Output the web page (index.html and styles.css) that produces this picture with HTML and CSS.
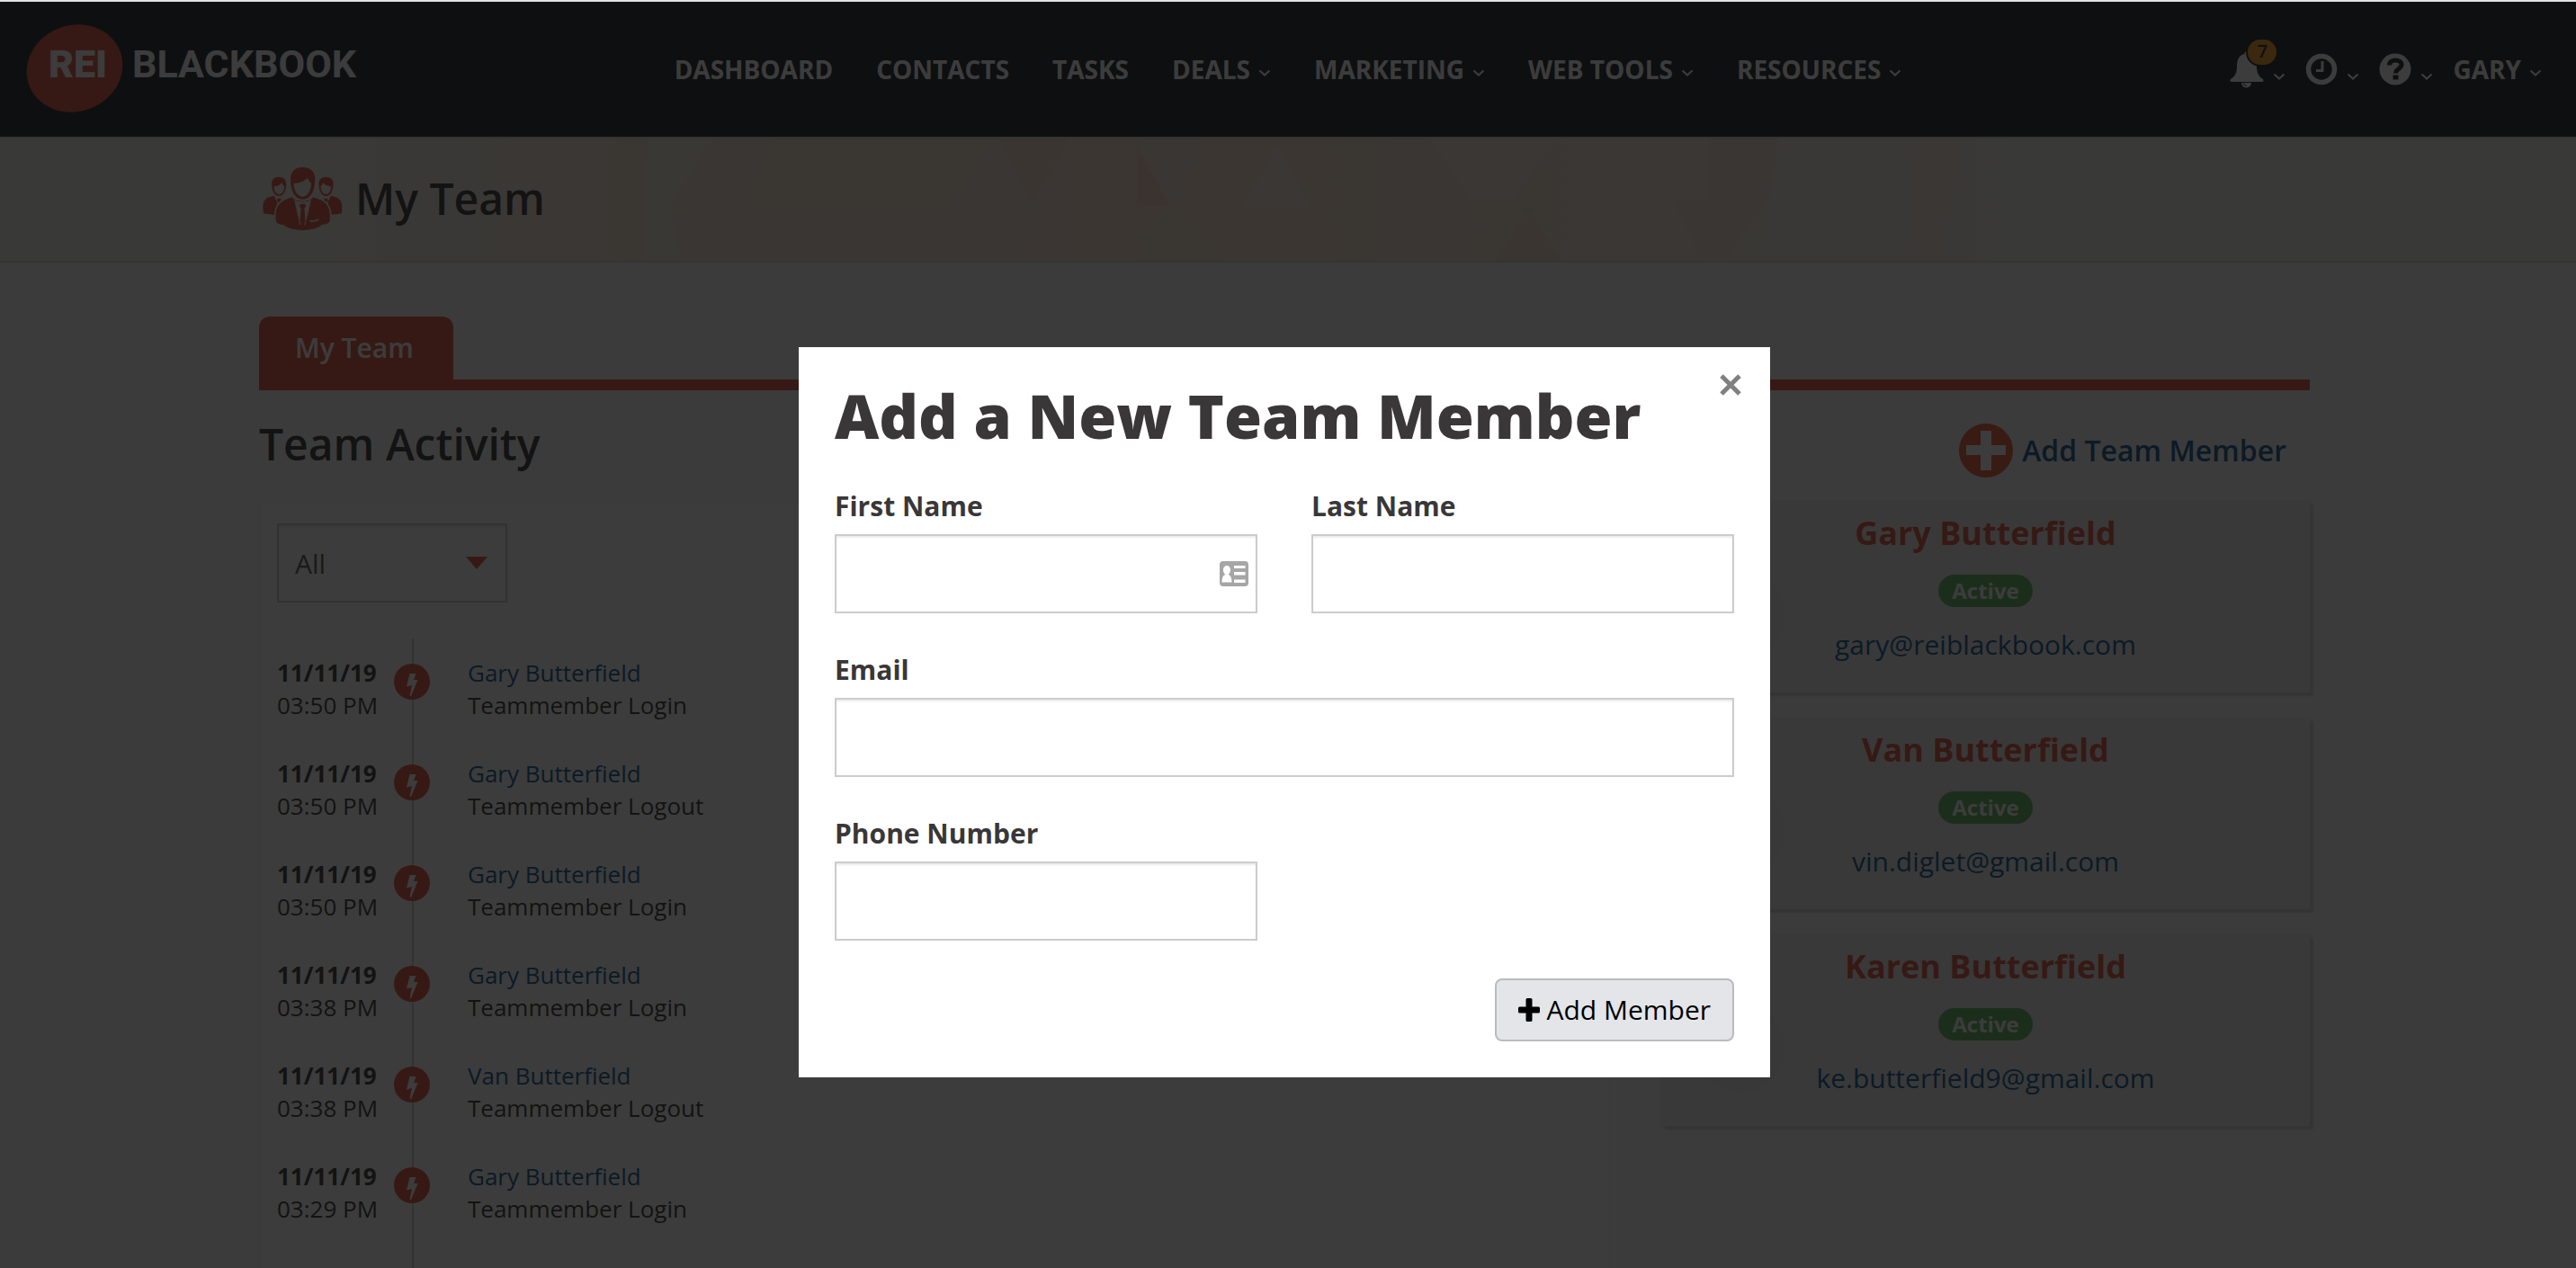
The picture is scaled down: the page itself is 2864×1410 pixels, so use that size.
FILE: index.html
```html
<!DOCTYPE html>
<html lang="en">
<head>
<meta charset="utf-8">
<meta name="viewport" content="width=device-width, initial-scale=1">
<title>My Team</title>
<link rel="stylesheet" href="styles.css">
</head>
<body>
<svg class="sprite" aria-hidden="true">
  <symbol id="chevron" viewBox="0 0 14 8"><path d="M1.5 1.5 7 6.500 12.500 1.500" fill="none" stroke="currentColor" stroke-width="2.200"/></symbol>
  <symbol id="bolt" viewBox="0 0 40 40"><path d="M17.500 11h7l-2.500 7h4.500l-7.500 18-1.500-.5 2.500-11.500-6 1.500z" fill="#fff"/></symbol>
</svg>

<header class="topbar">
  <a class="logo" href="#" aria-label="REI BlackBook">
    <svg width="372" height="100" viewBox="0 0 372 100">
      <ellipse cx="53" cy="49" rx="54" ry="48" transform="rotate(-20 53 49)" fill="#e25138"/>
      <text class="logo-rei" x="24" y="59">REI</text>
      <text class="logo-name" x="117" y="59">BLACKBOOK</text>
    </svg>
  </a>
  <nav class="mainnav">
    <a href="#">DASHBOARD</a>
    <a href="#">CONTACTS</a>
    <a href="#">TASKS</a>
    <a href="#">DEALS <svg class="chev"><use href="#chevron"/></svg></a>
    <a href="#">MARKETING <svg class="chev"><use href="#chevron"/></svg></a>
    <a href="#">WEB TOOLS <svg class="chev"><use href="#chevron"/></svg></a>
    <a href="#">RESOURCES <svg class="chev"><use href="#chevron"/></svg></a>
  </nav>
  <div class="tools">
    <button class="tool bell" type="button" aria-label="Notifications">
      <svg width="38" height="42" viewBox="0 0 38 42"><path d="M16.500 4q0-3 2-3t2 3c6 1 9.500 6 9.500 13 0 8 2 12 7 15 1 2 .5 3-1 3H2c-1.500 0-2-1-1-3 5-3 7-7 7-15 0-7 3-12 8.500-13z" fill="#fff"/><path d="M13 36h11a5.500 5.500 0 0 1-11 0z" fill="#fff"/><path d="M15.500 36.500q.5 2.500 3 3" fill="none" stroke="#1a2025"/></svg>
      <span class="count">7</span>
      <svg class="chev low"><use href="#chevron"/></svg>
    </button>
    <button class="tool" type="button" aria-label="Recent">
      <svg width="36" height="36" viewBox="0 0 36 36"><circle cx="18" cy="18" r="14.500" fill="none" stroke="#fff" stroke-width="5.500"/><path d="M19 9v10.500h-7" fill="none" stroke="#fff" stroke-width="3"/></svg>
      <svg class="chev low"><use href="#chevron"/></svg>
    </button>
    <button class="tool" type="button" aria-label="Help">
      <svg width="36" height="36" viewBox="0 0 36 36"><circle cx="18" cy="18" r="17.500" fill="#fff"/><path d="M11.500 13.500c0-7.500 13.500-7 13.500-.5 0 4.500-6.500 4.500-6.500 9.500" fill="none" stroke="#1a2025" stroke-width="5"/><path d="M15.500 24.500h6v5h-6z" fill="#1a2025"/></svg>
      <svg class="chev low"><use href="#chevron"/></svg>
    </button>
    <button class="tool user" type="button">GARY <svg class="chev"><use href="#chevron"/></svg></button>
  </div>
</header>

<section class="banner">
  <svg class="banner-art" viewBox="0 0 2864 136" preserveAspectRatio="none" aria-hidden="true">
    <defs><linearGradient id="warm"><stop offset="0" stop-color="#f1f1eb"/><stop offset=".12" stop-color="#f1efe9"/><stop offset=".24" stop-color="#f6e3d3"/><stop offset=".5" stop-color="#f7dfcc"/><stop offset=".68" stop-color="#f3e8d9"/><stop offset=".78" stop-color="#f1ede6"/><stop offset="1" stop-color="#f1f1eb"/></linearGradient></defs>
    <path d="M0 0h2864v136H0z" fill="url(#warm)"/>
    <path d="M0 0h156v136H0z" fill="#edede8"/>
    <path d="M720 0h70l-46 76 12 60h-40z" fill="#f2e9dc"/>
    <path d="M860 0h250l-60 75H830z" fill="#f6dec8"/>
    <path d="M1110 0l38 70 42-70z" fill="#f6dcc5"/>
    <path d="M1264 8l36 66h-36z" fill="#fad2c0"/>
    <path d="M1270 0h70l-38 70z" fill="#f5e2d6"/>
    <path d="M1300 74l60 62h-100z" fill="#f6dfca"/>
    <path d="M1420 8l38 68h-76z" fill="#f5e4d8"/>
    <path d="M1590 0h140l-48 68-46 0z" fill="#f4e5db"/>
    <path d="M1700 76l36 60h-72z" fill="#f5dcc5"/>
    <path d="M1900 0h78v50l-60 86h-26l-32-66 40 0z" fill="#f4e0d5"/>
    <path d="M1978 0h150l-20 136h-150z" fill="#f2ebdf"/>
    <path d="M2130 0h50l-20 136h-40z" fill="#f3e5da"/>
  </svg>
  <div class="banner-inner">
    <svg width="89" height="70" viewBox="36 27 266 210" aria-hidden="true">
      <g id="side">
        <path fill="#e25138" d="M66 87c-2-18 8-28 24-28s26 10 24 28c-1 24-12 36-24 36S67 111 66 87zM38 180c-6-40 4-52 36-58l10 22-6 44c-8-6-30-2-40-8z"/>
        <path fill="#efefe9" d="M73 91c14-1 22-6 27-13 2 8 6 10 8 13-1 18-9 26-18 26s-16-9-17-26z"/>
        <path fill="#e25138" d="M86 131h10l2 6-5 6 2 20-6 6-2-26-4-6z"/>
      </g>
      <use href="#side" transform="matrix(-1 0 0 1 337 0)"/>
      <path fill="#efefe9" d="M74 196c0-40 14-62 46-68l10-16h80l8 16c32 6 48 28 48 68z"/>
      <path fill="#e25138" d="M129 72c-3-28 12-45 40-45s44 17 41 45c0 38-18 62-41 62s-40-24-40-62z"/>
      <path fill="#efefe9" d="M139 81c22-2 38-9 46-19 4 9 9 15 13 19-2 28-14 44-29 44s-29-16-30-44z"/>
      <path fill="#e25138" d="M79 190c0-38 18-52 55-63 10 18 60 18 70 0 38 11 56 25 56 63 2 20-4 28-26 28-28 25-102 25-130 0-20 0-26-8-25-28z"/>
      <path fill="#efefe9" d="M141 136l19 83h18l19-83c-16 9-40 9-56 0z"/>
      <path fill="#e25138" d="M161 149h16l3 7-5 8 3 42-6 18h-6l-6-18 3-42-5-8z"/>
      <path fill="none" stroke="#efefe9" stroke-width="5" d="M192 206c12 2 22 0 31-5"/>
    </svg>
    <h1>My Team</h1>
  </div>
</section>

<main class="page">
  <div class="tabs"><a class="tab" href="#">My Team</a></div>
  <div class="columns">
    <section class="activity">
      <h2>Team Activity</h2>
      <div class="panel">
        <div class="filter">
          <select aria-label="Activity type"><option>All</option></select>
          <svg width="24" height="14" viewBox="0 0 24 14" aria-hidden="true"><path d="M0 0h24L12 14z" fill="#e25138"/></svg>
        </div>
        <ol class="timeline">
          <li><div class="when"><b>11/11/19</b><span>03:50 PM</span></div><svg class="dot"><use href="#bolt"/></svg><div class="what"><a href="#">Gary Butterfield</a><span>Teammember Login</span></div></li>
          <li><div class="when"><b>11/11/19</b><span>03:50 PM</span></div><svg class="dot"><use href="#bolt"/></svg><div class="what"><a href="#">Gary Butterfield</a><span>Teammember Logout</span></div></li>
          <li><div class="when"><b>11/11/19</b><span>03:50 PM</span></div><svg class="dot"><use href="#bolt"/></svg><div class="what"><a href="#">Gary Butterfield</a><span>Teammember Login</span></div></li>
          <li><div class="when"><b>11/11/19</b><span>03:38 PM</span></div><svg class="dot"><use href="#bolt"/></svg><div class="what"><a href="#">Gary Butterfield</a><span>Teammember Login</span></div></li>
          <li><div class="when"><b>11/11/19</b><span>03:38 PM</span></div><svg class="dot"><use href="#bolt"/></svg><div class="what"><a href="#">Van Butterfield</a><span>Teammember Logout</span></div></li>
          <li><div class="when"><b>11/11/19</b><span>03:29 PM</span></div><svg class="dot"><use href="#bolt"/></svg><div class="what"><a href="#">Gary Butterfield</a><span>Teammember Login</span></div></li>
        </ol>
      </div>
    </section>
    <aside class="members">
      <a class="add-link" href="#">
        <svg width="60" height="60" viewBox="0 0 60 60" aria-hidden="true"><circle cx="30" cy="30" r="30" fill="#ec5a36"/><path d="M24 8h12v16h16v11H36v17H24V35H8V24h16z" fill="#fff"/></svg>
        Add Team Member
      </a>
      <article class="card"><span class="avatar"></span><div><h3>Gary Butterfield</h3><span class="badge">Active</span><a href="#">gary@reiblackbook.com</a></div></article>
      <article class="card"><span class="avatar"></span><div><h3>Van Butterfield</h3><span class="badge">Active</span><a href="#">vin.diglet@gmail.com</a></div></article>
      <article class="card"><span class="avatar"></span><div><h3>Karen Butterfield</h3><span class="badge">Active</span><a href="#">ke.butterfield9@gmail.com</a></div></article>
    </aside>
  </div>
</main>

<div class="overlay">
  <form class="modal" role="dialog" aria-labelledby="modal-title">
    <button class="close" type="button" aria-label="Close"><svg width="24" height="24" viewBox="0 0 24 24"><path d="M2 2l20 20M22 2 2 22" stroke="#808080" stroke-width="5"/></svg></button>
    <h2 id="modal-title">Add a New Team Member</h2>
    <div class="fields">
      <div class="field">
        <label for="first">First Name</label>
        <div class="control">
          <input id="first" type="text">
          <svg width="32" height="28" viewBox="0 0 32 28" aria-hidden="true"><rect width="32" height="28" rx="4" fill="#a6a6a6"/><path d="M2.500 23.500c0-5 1.500-8 4-8.500-4-3-3-10 1.500-10s5.500 7 1.500 10c2.500.5 4 3.500 4 8.500zM16 5h12.500v3H16zM16 12h12.500v3.500H16zM16 20.500h12.500V24H16z" fill="#fff"/></svg>
        </div>
      </div>
      <div class="field">
        <label for="last">Last Name</label>
        <div class="control"><input id="last" type="text"></div>
      </div>
      <div class="field wide">
        <label for="email">Email</label>
        <div class="control"><input id="email" type="email"></div>
      </div>
      <div class="field">
        <label for="phone">Phone Number</label>
        <div class="control"><input id="phone" type="tel"></div>
      </div>
    </div>
    <button class="submit" type="submit"><svg width="24" height="26" viewBox="0 0 24 26" aria-hidden="true"><path d="M10 0h4q1.500 0 1.500 1.500V9.500h7q1.500 0 1.500 1.500v4q0 1.500-1.500 1.500h-7v8q0 1.500-1.500 1.500h-4q-1.500 0-1.500-1.500v-8h-7Q0 16.500 0 15v-4q0-1.500 1.500-1.500h7v-8Q8.500 0 10 0z"/></svg>Add Member</button>
  </form>
</div>
</body>
</html>
```

FILE: styles.css
```css
* { box-sizing: border-box; }

html { overflow: hidden; }

body {
  margin: 0;
  height: 100vh;
  display: flex;
  flex-direction: column;
  font: 30px/40px "Open Sans", sans-serif;
  color: #333;
  background: #fafafa;
}

h1, h2, h3, ol { margin: 0; padding: 0; }
a { color: #0b5591; text-decoration: none; }
button { font: inherit; cursor: pointer; }
.sprite { display: none; }

/* top bar */
.topbar {
  flex: none;
  height: 152px;
  padding: 0 30px;
  border-top: 2px solid #dfe3e3;
  background: #1a2025;
  display: grid;
  grid-template-columns: 1fr auto 1fr;
  align-items: center;
}
.logo svg { display: block; overflow: visible; }
.logo text { font-family: Roboto, sans-serif; font-size: 43px; fill: #fff; }
.logo-rei { font-weight: 900; }
.logo-name { font-weight: 700; }

.mainnav { display: flex; gap: 48px; }
.mainnav a, .user {
  display: flex;
  align-items: center;
  gap: 9px;
  color: #fff;
  font-size: 28px;
  font-weight: 700;
}
.chev { width: 14px; height: 8px; margin-top: 8px; color: #fff; }
.chev.low { margin-top: 16px; }

.tools { display: flex; justify-content: flex-end; align-items: center; gap: 22px; padding-right: 8px; }
.tool {
  position: relative;
  display: flex;
  align-items: center;
  gap: 10px;
  padding: 0;
  border: 0;
  background: none;
}
.tool.user { gap: 9px; }
.count {
  position: absolute;
  left: 18px;
  top: -14px;
  width: 36px;
  height: 32px;
  border: 2px solid #1a2025;
  border-radius: 16px;
  background: #f29a22;
  color: #1a2025;
  font-size: 20px;
  line-height: 26px;
  font-weight: 600;
}

/* banner */
.banner {
  flex: none;
  position: relative;
  border: 2px solid #d5d5d0;
  border-width: 2px 0;
  height: 140px;
}
.banner-art { position: absolute; inset: 0; width: 100%; height: 100%; }
.banner-inner, .page {
  width: 2288px;
  max-width: 100%;
  margin: 0 auto;
  padding-right: 8px;
}
.banner-inner {
  position: relative;
  height: 100%;
  padding-left: 4px;
  padding-bottom: 3px;
  display: flex;
  align-items: center;
  gap: 14px;
}
h1, .activity h2 { font-size: 48px; line-height: 64px; font-weight: 600; }

/* page */
.page { flex: 1; min-height: 0; padding-top: 60px; display: flex; flex-direction: column; }
.tabs { display: flex; border-bottom: 12px solid #e25138; }
.tab {
  padding: 15px 44px 15px 40px;
  border-radius: 12px 12px 0 0;
  background: #e25138;
  color: #fff;
  font-weight: 600;
}
.columns { flex: 1; display: grid; grid-template-columns: 1502px 721px; justify-content: space-between; }
.activity { padding-top: 28px; display: flex; flex-direction: column; }
.panel {
  flex: 1;
  margin-top: 32px;
  padding: 22px 18px 0;
  border: 2px solid #f4f4f4;
  border-bottom: 0;
  background: #fff;
}
.filter { position: relative; width: 256px; }
.filter select {
  appearance: none;
  display: block;
  width: 100%;
  height: 88px;
  padding: 2px 18px 0;
  border: 2px solid #ccc;
  border-radius: 0;
  background: #fff;
  box-shadow: inset 0 2px 2px rgba(0, 0, 0, .08);
  font: inherit;
  color: #555;
}
.filter svg { position: absolute; right: 22px; top: 37px; }

.timeline {
  list-style: none;
  margin-top: 40px;
  padding: 20px 0 60px;
  background: linear-gradient(#ccc, #ccc) 150px 0 / 2px 100% no-repeat;
}
.timeline li {
  display: grid;
  grid-template-columns: 130px 40px 1fr;
  height: 112px;
  font-size: 26px;
  line-height: 36px;
}
.when, .what { display: flex; flex-direction: column; }
.what { padding-left: 42px; }
.dot { width: 40px; height: 40px; margin-top: 8px; border-radius: 20px; background: #e25138; }

/* team members */
.members { display: flex; flex-direction: column; gap: 28px; padding-top: 37px; }
.add-link {
  align-self: flex-end;
  display: flex;
  align-items: center;
  gap: 10px;
  height: 60px;
  margin: 0 26px -2px 0;
  font-size: 32px;
  font-weight: 600;
}
.card {
  display: grid;
  grid-template-columns: 100px 1fr 100px;
  height: 213px;
  padding: 0 38px;
  background: #f1f1f1;
  box-shadow: 4px 4px 2px #d4d4d4, 0 0 2px #ddd;
}
.avatar { width: 100px; height: 100px; margin-top: 76px; border-radius: 50%; background: #ebebeb; }
.card div { display: flex; flex-direction: column; align-items: center; padding-top: 12px; }
.card h3 { font-size: 36px; line-height: 48px; font-weight: 700; color: #e25138; }
.badge {
  margin: 22px 0;
  padding: 0 15px;
  border-radius: 18px;
  background: #5cb85c;
  color: #fff;
  font-size: 24px;
  line-height: 36px;
  font-weight: 700;
}

/* dialog */
.overlay {
  position: fixed;
  inset: 2px 0 0;
  padding: 384px 8px 0 0;
  background: rgba(11, 11, 11, .8);
}
.modal {
  position: relative;
  width: 1080px;
  max-width: 100%;
  margin: 0 auto;
  padding: 40px;
  background: #fff;
  color: #393738;
  display: flex;
  flex-direction: column;
}
.modal h2 { font-size: 68px; line-height: 72px; font-weight: 800; }
.close { position: absolute; right: 32px; top: 30px; padding: 0; border: 0; background: none; line-height: 0; }
.fields { display: grid; grid-template-columns: 1fr 1fr; gap: 42px 60px; margin: 44px 0 42px; }
.wide { grid-column: 1 / -1; }
.field { display: flex; flex-direction: column; gap: 10px; }
.field label { font-weight: 700; line-height: 42px; }
.control { position: relative; }
.control input {
  display: block;
  width: 100%;
  height: 88px;
  padding: 0 18px;
  border: 2px solid #ccc;
  background: #fff;
  box-shadow: inset 0 2px 2px rgba(0, 0, 0, .08);
  font: inherit;
}
.control svg { position: absolute; right: 10px; top: 30px; }
.submit {
  align-self: flex-end;
  display: flex;
  align-items: center;
  gap: 7px;
  height: 70px;
  padding: 0 24px;
  border: 2px solid #bbb;
  border-radius: 8px;
  background: #e4e5e9;
  color: #000;
}
```
